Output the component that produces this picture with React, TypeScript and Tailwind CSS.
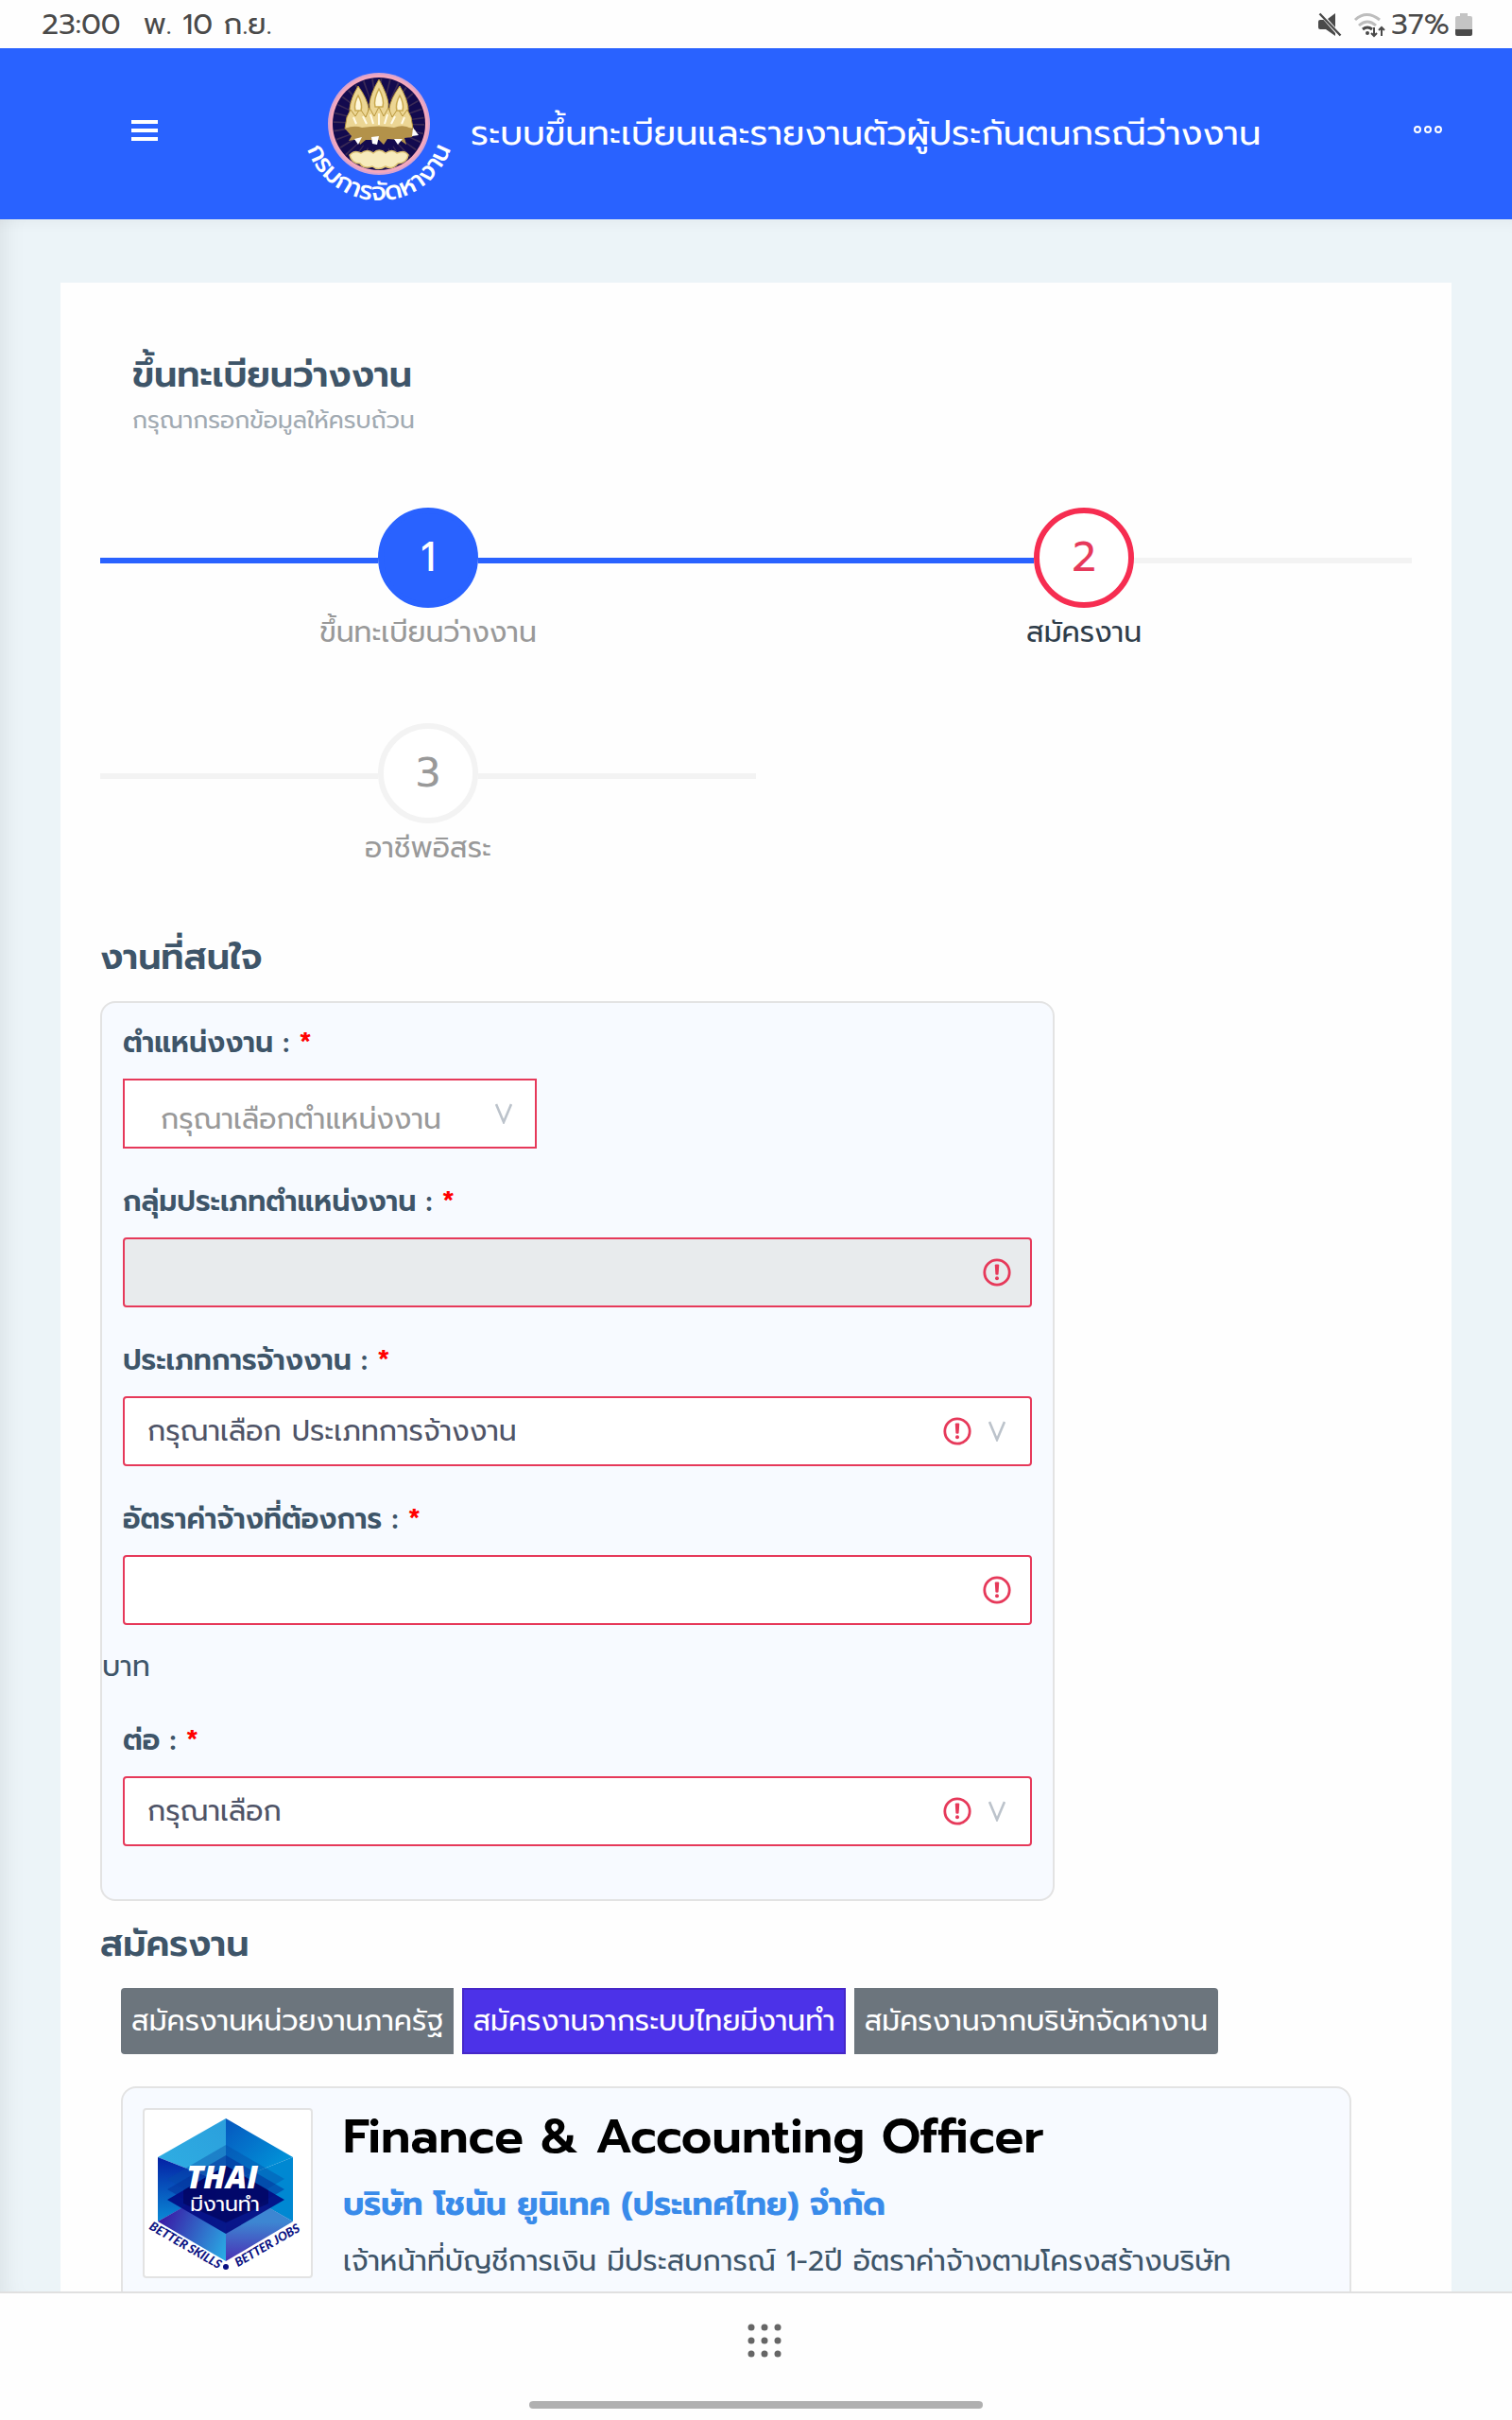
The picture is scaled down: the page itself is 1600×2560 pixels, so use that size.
import type { ReactNode } from "react";

const steps = [
  { no: 1, label: "ขึ้นทะเบียนว่างงาน", state: "done" },
  { no: 2, label: "สมัครงาน", state: "active" },
  { no: 3, label: "อาชีพอิสระ", state: "todo" },
];

const circleStyles: Record<string, string> = {
  done: "bg-[#2962ff] border-[#2962ff] text-white",
  active: "bg-white border-[#f62d51] text-[#e6395a]",
  todo: "bg-white border-[#f3f3f3] text-[#999999]",
};

const tabs = [
  { label: "สมัครงานหน่วยงานภาครัฐ", active: false },
  { label: "สมัครงานจากระบบไทยมีงานทำ", active: true },
  { label: "สมัครงานจากบริษัทจัดหางาน", active: false },
];

function StatusBar() {
  return (
    <div className="flex h-[51px] shrink-0 items-center justify-between bg-[#fefefe] pr-[42px] pl-11 text-[31px] leading-10 text-[#4a4a4a]">
      <div className="flex gap-6">
        <span>23:00</span>
        <span>พ. 10 ก.ย.</span>
      </div>
      <div className="flex items-center">
        <svg className="mr-3 h-[26px] w-[26px]" viewBox="0 0 26 26" fill="#4a4a4a">
          <path d="M1 10q0-2 2-2h3.5L19 22v3L9 18H3q-2 0-2-2z" />
          <path d="M19 1v15L11 7z" />
          <path d="M2.5 1.5l22 23" stroke="#4a4a4a" strokeWidth="2.4" />
        </svg>
        <svg className="mr-1.5 h-7 w-[34px]" viewBox="0 0 34 28" fill="none" strokeWidth="3">
          <path d="M2 9q12-11 26 0" stroke="#bdbdbd" />
          <path d="M6 15q9-8 18 0" stroke="#bdbdbd" />
          <path d="M10 19q5-4 10 0" stroke="#4a4a4a" />
          <circle cx="15" cy="23" r="2" fill="#4a4a4a" />
          <path d="M22 17v9M19 23l3 3 3-3M30 26v-9M27 20l3-3 3 3" stroke="#4a4a4a" strokeWidth="2" />
        </svg>
        <span>37%</span>
        <svg className="ml-1.5 h-6 w-[18px]" viewBox="0 0 18 24">
          <path d="M5 0h8v3h3q2 0 2 2v12H0V5q0-2 2-2h3z" fill="#c4c4c4" />
          <path d="M0 17h18v5q0 2-2 2H2q-2 0-2-2z" fill="#4a4a4a" />
        </svg>
      </div>
    </div>
  );
}

function DepartmentLogo() {
  return (
    <svg className="h-[160px] w-[184px] shrink-0 overflow-visible" viewBox="-12 -5 184 160">
      <circle cx="79" cy="65" r="54" fill="#d9a3cf" />
      <circle cx="79" cy="65" r="52" fill="#f4a8bd" />
      <circle cx="79" cy="65" r="49" fill="#130a4e" />
      <circle cx="79" cy="65" r="38" fill="none" stroke="#3a2a55" strokeWidth="20" strokeDasharray="1.5 6" />
      <g fill="#ecd694" stroke="#b8963c" strokeWidth="1">
        <path d="M79 18q-9 15-10 26l1 22h18l1-22q-1-10-10-26z" />
        <path d="M57 25q-8 13-9 24l2 18h16l2-18q-1-10-11-24z" />
        <path d="M101 25q8 13 9 24l-2 18H92l-2-18q1-10 11-24z" />
        <path d="M45 58l4-8 5 7 5-8 6 9 4-10 5 9 5-10 5 10 5-9 4 10 6-9 5 8 5-7 4 8 2 12H43z" />
      </g>
      <path d="M79 28q-6 11-4 19h8q2-8-4-19zM57 35q-5 9-3 16h6q2-7-3-16zM101 35q5 9 3 16h-6q-2-7 3-16z" fill="#fff8dc" stroke="#c9a94f" strokeWidth="1.5" />
      <path d="M62 57l4 8M70 55l3 10M79 54v12M88 55l-3 10M96 57l-4 8M52 58l3 7M106 58l-3 7" stroke="#fffbe8" strokeWidth="2" />
      <path d="M43 70q10-4 18-1 18-3 34 0 10-4 18 1l5 2-4 7-8 1 2 7-7-5-13-1-4 6-5-5H65l-6 5-2-6-10 2 3-5z" fill="#b3924a" />
      <path d="M53 81l8-2-4 8zM71 79l8-1-2 9-5-1zM95 81l9 0-5 6zM115 69l6 8-7 1z" fill="#fff" />
      <path d="M48 98q5-6 12-2 7-5 13 0 6-6 13 0 7-5 12 0 8-4 12 2-1 8-11 9-6 7-13 3-8 5-14 0-9 3-13-3-9 0-11-9z" fill="#f7ebbd" stroke="#dcc070" strokeWidth="1.5" />
      <path id="seal-arc" d="M-1 66a80 80 0 0 0 160 0" fill="none" />
      <text className="text-[27px] font-medium" fill="#fff" textAnchor="middle">
        <textPath href="#seal-arc" startOffset="50%">กรมการจัดหางาน</textPath>
      </text>
    </svg>
  );
}

function ThaiJobLogo() {
  return (
    <svg className="h-full w-full" viewBox="0 0 176 176">
      <defs>
        <linearGradient id="tl" x1="0" y1="1" x2="1" y2="0">
          <stop offset="0" stopColor="#2fb0e4" />
          <stop offset="1" stopColor="#2b9fdc" />
        </linearGradient>
        <linearGradient id="tr" x1="0" y1="0" x2="1" y2="1">
          <stop offset="0" stopColor="#0656be" />
          <stop offset="1" stopColor="#00a4e0" />
        </linearGradient>
        <linearGradient id="lf" x1="0" y1="0" x2="0" y2="1">
          <stop offset="0" stopColor="#0420a4" />
          <stop offset="1" stopColor="#0a8ad6" />
        </linearGradient>
        <linearGradient id="bl" x1="0" y1="0.5" x2="1" y2="1">
          <stop offset="0" stopColor="#3a16a4" />
          <stop offset="1" stopColor="#29b0e6" />
        </linearGradient>
        <linearGradient id="br" x1="0" y1="0.5" x2="0" y2="1">
          <stop offset="0" stopColor="#3d86d2" />
          <stop offset="1" stopColor="#4a30b4" />
        </linearGradient>
      </defs>
      <path d="M86 9L14 50l72 28z" fill="url(#tl)" />
      <path d="M86 9l71 41-71 28z" fill="url(#tr)" />
      <path d="M14 50v68l72-40z" fill="url(#lf)" />
      <path d="M157 50v68L86 78z" fill="#0088d2" />
      <path d="M14 118l72 42V77z" fill="url(#bl)" />
      <path d="M157 118l-71 42V77z" fill="url(#br)" />
      <path d="M86 37l62 36-62 36-62-36z" fill="#044ba8" opacity=".4" />
      <path d="M86 48l62 36-62 36-62-36z" fill="#03319a" opacity=".55" />
      <path d="M86 59l62 36-62 36-62-36z" fill="#020a82" opacity=".9" />
      <path d="M86 59l45 26 0 14-45 20-45-20 0-14z" fill="#02004e" opacity=".5" />
      <text x="82" y="83" className="font-['Open_Sans'] text-[33px] font-extrabold italic" fill="#fff" textAnchor="middle">
        THAI
      </text>
      <text x="85" y="107" className="text-[22px]" fill="#fff" textAnchor="middle">
        มีงานทำ
      </text>
      <g className="font-['Lato'] text-[13px] font-black italic" fill="#0a1282" textAnchor="middle">
        <text transform="translate(41 147) rotate(30)">BETTER SKILLS</text>
        <text transform="translate(132 147) rotate(-30)">BETTER JOBS</text>
      </g>
      <circle cx="86" cy="166" r="3" fill="#0a1282" />
    </svg>
  );
}

function ErrorIcon() {
  return (
    <svg className="h-[30px] w-[30px]" viewBox="0 0 30 30" fill="none">
      <circle cx="15" cy="15" r="13.2" stroke="#e6395a" strokeWidth="2.8" />
      <path d="M12.8 7.5q0-1 1-1h2.4q1 0 1 1l-.6 9.5q-.1.8-1.6.8t-1.6-.8z" fill="#e6395a" />
      <circle cx="15" cy="21.3" r="2" fill="#e6395a" />
    </svg>
  );
}

function Chevron() {
  return (
    <svg className="mr-1.5 h-[22px] w-[18px]" viewBox="0 0 18 22" fill="none">
      <path d="M1 1L9 20 17 1" stroke="#bcc3cb" strokeWidth="2.6" />
    </svg>
  );
}

type FieldProps = { id: string; label: string; icons?: ReactNode; children: ReactNode };

function Field({ id, label, icons, children }: FieldProps) {
  return (
    <div className="px-[22px]">
      <label htmlFor={id} className="block text-[30px] leading-10 font-semibold text-[#3e5569]">
        {label} : <span className="text-[#ff0000]">*</span>
      </label>
      <div className="relative mt-[18px] w-full">
        {children}
        <div className="pointer-events-none absolute inset-y-0 right-[22px] flex items-center gap-[18px]">{icons}</div>
      </div>
    </div>
  );
}

const control = "block h-[74px] w-full appearance-none rounded border-2 border-[#e6395a] bg-white px-6 text-[30px] text-[#4f5467]";

function Steps() {
  return (
    <ol className="mt-[72px] grid grid-cols-2 gap-y-[34px]">
      {steps.map((step) => (
        <li key={step.no} className="flex h-[194px] flex-col items-center">
          <div className="flex w-full items-center">
            <span className={step.state === "todo" ? "mt-1.5 h-1.5 flex-1 bg-[#f3f3f3]" : "mt-1.5 h-1.5 flex-1 bg-[#2962ff]"} />
            <span className={`flex size-[106px] items-center justify-center rounded-full border-[6px] text-[44px] ${circleStyles[step.state]}`}>
              {step.no}
            </span>
            <span className={step.state === "done" ? "mt-1.5 h-1.5 flex-1 bg-[#2962ff]" : "mt-1.5 h-1.5 flex-1 bg-[#f3f3f3]"} />
          </div>
          <span className={step.state === "active" ? "mt-1.5 text-[30px] leading-10 text-[#2f3d4a]" : "mt-1.5 text-[30px] leading-10 text-[#999999]"}>
            {step.label}
          </span>
        </li>
      ))}
    </ol>
  );
}

function InterestForm() {
  return (
    <form className="mt-[22px] w-fit min-w-[1010px] rounded-2xl border-2 border-[#e3e3e3] bg-[#f7faff] pt-[22px] pb-14">
      <div className="flex flex-col gap-9">
        <div className="px-[22px]">
          <label htmlFor="position" className="block text-[30px] leading-10 font-semibold text-[#3e5569]">
            ตำแหน่งงาน : <span className="text-[#ff0000]">*</span>
          </label>
          <div className="relative mt-[18px] w-[438px]">
            <select id="position" className="block h-[74px] w-full appearance-none border-2 border-[#e6395a] bg-white pt-3 pl-[38px] text-[30px] text-[#999999]">
              <option>กรุณาเลือกตำแหน่งงาน</option>
            </select>
            <div className="pointer-events-none absolute inset-y-0 right-5 flex items-center">
              <Chevron />
            </div>
          </div>
        </div>
        <Field id="group" label="กลุ่มประเภทตำแหน่งงาน" icons={<ErrorIcon />}>
          <input id="group" disabled className="block h-[74px] w-full rounded border-2 border-[#e6395a] bg-[#e8ebed] px-6 text-[30px]" />
        </Field>
        <Field id="type" label="ประเภทการจ้างงาน" icons={<><ErrorIcon /><Chevron /></>}>
          <select id="type" className={control}>
            <option>กรุณาเลือก ประเภทการจ้างงาน</option>
          </select>
        </Field>
        <Field id="wage" label="อัตราค่าจ้างที่ต้องการ" icons={<ErrorIcon />}>
          <input id="wage" className={control} />
        </Field>
      </div>
      <p className="mt-6 text-[30px] leading-10 text-[#3e5569]">บาท</p>
      <div className="mt-[38px]">
        <Field id="per" label="ต่อ" icons={<><ErrorIcon /><Chevron /></>}>
          <select id="per" className={control}>
            <option>กรุณาเลือก</option>
          </select>
        </Field>
      </div>
    </form>
  );
}

function JobCard() {
  return (
    <article className="mt-[34px] mr-16 ml-[22px] flex rounded-2xl border-2 border-[#e3e3e3] bg-[#f7faff] px-[21px] pt-[21px] pb-16">
      <div className="size-[180px] shrink-0 rounded border-2 border-[#e3e3e3] bg-white">
        <ThaiJobLogo />
      </div>
      <div className="ml-8">
        <h3 className="text-[51px] leading-[60px] font-semibold text-black">Finance &amp; Accounting Officer</h3>
        <p className="mt-4 text-[34px] leading-[52px] font-bold text-[#398bea]">บริษัท โชนัน ยูนิเทค (ประเทศไทย) จำกัด</p>
        <p className="mt-2 text-[30px] leading-[52px] text-[#3e5569]">
          เจ้าหน้าที่บัญชีการเงิน มีประสบการณ์ 1-2ปี อัตราค่าจ้างตามโครงสร้างบริษัท
        </p>
      </div>
    </article>
  );
}

export default function App() {
  return (
    <div className="flex h-screen flex-col overflow-hidden bg-[#ecf4f8] font-['Prompt','Noto_Sans_Thai','Inter',sans-serif]">
      <StatusBar />
      <header className="flex h-[181px] shrink-0 items-center bg-[#2962ff] pr-[74px] pb-0.5 pl-[139px] text-white">
        <button aria-label="เมนู" className="mr-[143px] mb-1.5 flex w-7 flex-col gap-[5px]">
          <span className="h-1 bg-white" />
          <span className="h-1 bg-white" />
          <span className="h-1 bg-white" />
        </button>
        <DepartmentLogo />
        <h1 className="ml-1 flex-1 text-[37px] leading-[60px] whitespace-nowrap">ระบบขึ้นทะเบียนและรายงานตัวผู้ประกันตนกรณีว่างงาน</h1>
        <button aria-label="เพิ่มเติม" className="mb-2 flex gap-[3px]">
          <span className="size-2 rounded-full border-2 border-white" />
          <span className="size-2 rounded-full border-2 border-white" />
          <span className="size-2 rounded-full border-2 border-white" />
        </button>
      </header>
      <main className="min-h-0 flex-1 overflow-hidden px-16 pt-[67px] shadow-[inset_24px_0_24px_-20px_rgba(0,0,0,0.08),inset_0_16px_16px_-14px_rgba(0,0,0,0.05)]">
        <section className="bg-[#fefefe] px-[42px] pt-[74px] pb-10">
          <div className="px-[34px]">
            <h2 className="text-[38px] leading-[48px] font-semibold text-[#3e5569]">ขึ้นทะเบียนว่างงาน</h2>
            <p className="mt-1 text-[25px] leading-10 text-[#a1aab2]">กรุณากรอกข้อมูลให้ครบถ้วน</p>
          </div>
          <Steps />
          <h2 className="mt-[30px] text-[38px] leading-[48px] font-semibold text-[#3e5569]">งานที่สนใจ</h2>
          <InterestForm />
          <h2 className="mt-[22px] text-[38px] leading-[48px] font-semibold text-[#3e5569]">สมัครงาน</h2>
          <div className="mt-[22px] ml-[22px] flex gap-[9px] text-[30px] leading-10 text-white">
            {tabs.map((tab) => (
              <button
                key={tab.label}
                className={
                  tab.active
                    ? "h-[70px] border-2 border-[#4527c8] bg-[#4c32e8] px-[9px]"
                    : "h-[70px] bg-[#6c757d] px-[11px] first:rounded-l last:rounded-r"
                }
              >
                {tab.label}
              </button>
            ))}
          </div>
          <JobCard />
        </section>
      </main>
      <footer className="flex h-[136px] shrink-0 flex-col items-center justify-between border-t-2 border-[#e0e0e0] bg-[#fefefe] pt-8 pb-3">
        <button aria-label="แอปทั้งหมด" className="ml-[17px]">
          <svg className="size-9" viewBox="0 0 36 36" fill="#666">
            {[4, 18, 32].map((y) => [4, 18, 32].map((x) => <circle key={`${x}-${y}`} cx={x} cy={y} r="3.5" />))}
          </svg>
        </button>
        <div className="h-2 w-[480px] rounded-full bg-[#b0b0b0]" />
      </footer>
    </div>
  );
}
